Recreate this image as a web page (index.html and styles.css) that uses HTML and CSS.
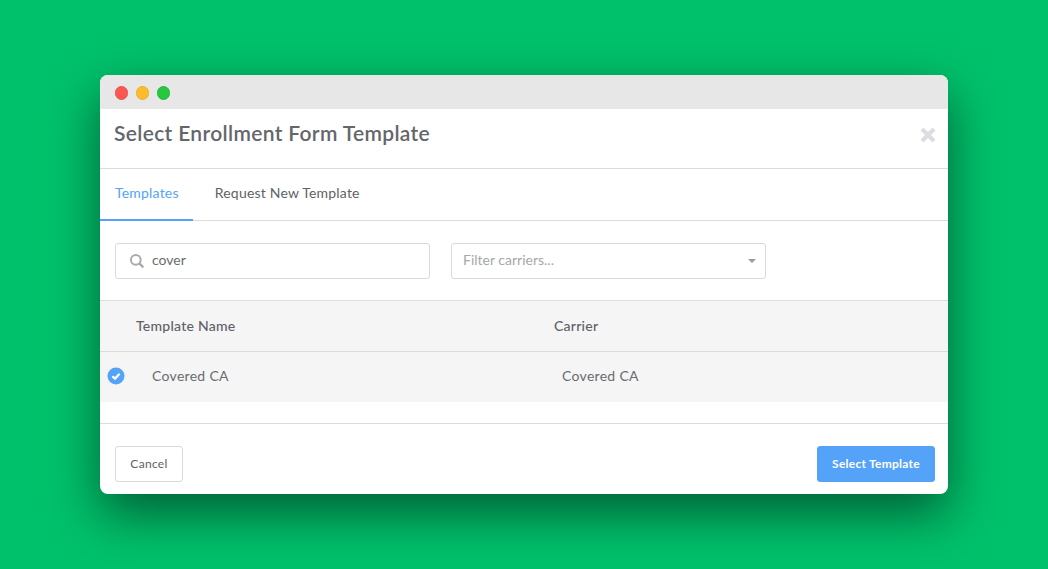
FILE: index.html
```html
<!DOCTYPE html>
<html lang="en">
<head>
<meta charset="utf-8">
<title>Select Enrollment Form Template</title>
<link rel="stylesheet" href="styles.css">
</head>
<body>
<main class="window">
  <div class="titlebar">
    <span class="light light-red"></span>
    <span class="light light-yellow"></span>
    <span class="light light-green"></span>
  </div>
  <header class="header">
    <h1 class="title">Select Enrollment Form Template</h1>
    <svg class="close" width="16" height="16" viewBox="0 0 16 16"><path d="M3.5 3.5L12.5 12.5M12.5 3.5L3.5 12.5" stroke="#dcdde0" stroke-width="4.2" stroke-linecap="square" fill="none"/></svg>
  </header>
  <nav class="tabs">
    <a class="tab tab-active">Templates</a>
    <a class="tab">Request New Template</a>
  </nav>
  <div class="filters">
    <div class="field">
      <svg class="search" width="16" height="16" viewBox="0 0 16 16"><circle cx="6.8" cy="6.8" r="4.9" stroke="#a9abae" stroke-width="2" fill="none"/><path d="M10.4 10.4L14.3 14.3" stroke="#a9abae" stroke-width="2.4" fill="none"/></svg>
      <span class="value">cover</span>
    </div>
    <div class="field field-select">
      <span class="placeholder">Filter carriers...</span>
      <span class="caret"></span>
    </div>
  </div>
  <div class="row row-head">
    <span class="cell-name">Template Name</span>
    <span class="cell-carrier">Carrier</span>
  </div>
  <div class="row row-body">
    <svg class="check" width="18" height="18" viewBox="0 0 18 18"><circle cx="9" cy="9" r="8.5" fill="#55a3f8"/><path d="M5.4 9.2L8 11.6L12.6 6.8" stroke="#fff" stroke-width="2.2" fill="none"/></svg>
    <span class="cell-name">Covered CA</span>
    <span class="cell-carrier">Covered CA</span>
  </div>
  <div class="spacer"></div>
  <footer class="footer">
    <button class="btn">Cancel</button>
    <button class="btn btn-primary">Select Template</button>
  </footer>
</main>
</body>
</html>
```
FILE: styles.css
```css
* { box-sizing: border-box; }
html, body { height: 100%; }
body {
  margin: 0;
  padding: 75px 100px 0;
  background: #00c16b;
  font-family: "Lato", "Liberation Sans", sans-serif;
  color: #5f6166;
  overflow: hidden;
}
.window {
  width: 848px;
  height: 419px;
  background: #fff;
  border-radius: 8px;
  box-shadow: 0 20px 50px rgba(0, 0, 0, 0.5);
  display: flex;
  flex-direction: column;
  overflow: hidden;
}
.titlebar {
  height: 34px;
  flex: none;
  background: #e7e7e7;
  display: flex;
  align-items: center;
  gap: 7.5px;
  padding: 2px 0 0 14.5px;
}
.light { width: 13.5px; height: 13.5px; border-radius: 50%; }
.light-red { background: #fc5753; border: 1px solid #e9504c; }
.light-yellow { background: #fdbc2d; border: 1px solid #eeac2a; }
.light-green { background: #27c83f; border: 1px solid #25b83b; }
.header {
  height: 60px;
  flex: none;
  border-bottom: 1px solid #dcdcdc;
  display: flex;
  justify-content: space-between;
  align-items: flex-start;
  padding: 0 12px 0 14px;
}
.title {
  margin: 10px 0 0;
  font-size: 21px;
  line-height: 28px;
  font-weight: 600;
  letter-spacing: 0.34px;
  color: #64666b;
}
.close { margin-top: 18px; }
.tabs {
  height: 52px;
  flex: none;
  border-bottom: 1px solid #dcdcdc;
  display: flex;
  font-size: 14px;
  letter-spacing: 0.2px;
}
.tab {
  height: 52px;
  line-height: 48px;
  padding: 0 15px;
  margin-right: 7px;
}
.tab-active {
  color: #55a3f8;
  border-bottom: 2px solid #55a3f8;
  padding-right: 14px;
}
.filters {
  height: 79px;
  flex: none;
  display: flex;
  gap: 21px;
  padding: 22px 0 0 15px;
}
.field {
  width: 315px;
  height: 36px;
  border: 1px solid #d9dadc;
  border-radius: 3px;
  display: flex;
  align-items: center;
  font-size: 14px;
}
.search { margin-left: 13px; margin-right: 7px; flex: none; }
.value { color: #6a6c70; padding-bottom: 3px; }
.field-select { justify-content: space-between; padding: 0 9px 0 11px; }
.placeholder { color: #a6a8ab; padding-bottom: 3px; }
.caret {
  width: 0;
  height: 0;
  border-left: 4px solid transparent;
  border-right: 4px solid transparent;
  border-top: 4px solid #9b9b9b;
}
.row {
  flex: none;
  display: flex;
  align-items: center;
  background: #f5f5f5;
  font-size: 14px;
}
.row-head {
  height: 52px;
  border-top: 1px solid #dcdcdc;
  border-bottom: 1px solid #dcdcdc;
  font-weight: 500;
  letter-spacing: 0.25px;
  padding-left: 36px;
}
.row-head span { padding-bottom: 2px; }
.row-head .cell-name { width: 418px; }
.row-body {
  height: 50px;
  padding-left: 6.5px;
  letter-spacing: 0.3px;
  color: #6a6c70;
}
.row-body span { padding-bottom: 3px; }
.check { flex: none; margin-right: 27.5px; margin-bottom: 2px; }
.row-body .cell-name { width: 410px; }
.spacer { height: 21px; flex: none; }
.footer {
  flex: 1;
  border-top: 1px solid #dcdcdc;
  display: flex;
  justify-content: space-between;
  align-items: flex-start;
  padding: 22px 13px 0 15px;
}
.btn {
  height: 36px;
  width: 68px;
  border: 1px solid #d9dadc;
  border-radius: 3px;
  background: #fff;
  color: #5f6166;
  font-family: inherit;
  font-size: 12px;
  letter-spacing: 0.3px;
  padding: 0 0 2px;
}
.btn-primary {
  width: 118px;
  background: #55a3f8;
  border-color: #55a3f8;
  color: #fff;
  font-weight: 700;
  letter-spacing: 0.25px;
}
```
